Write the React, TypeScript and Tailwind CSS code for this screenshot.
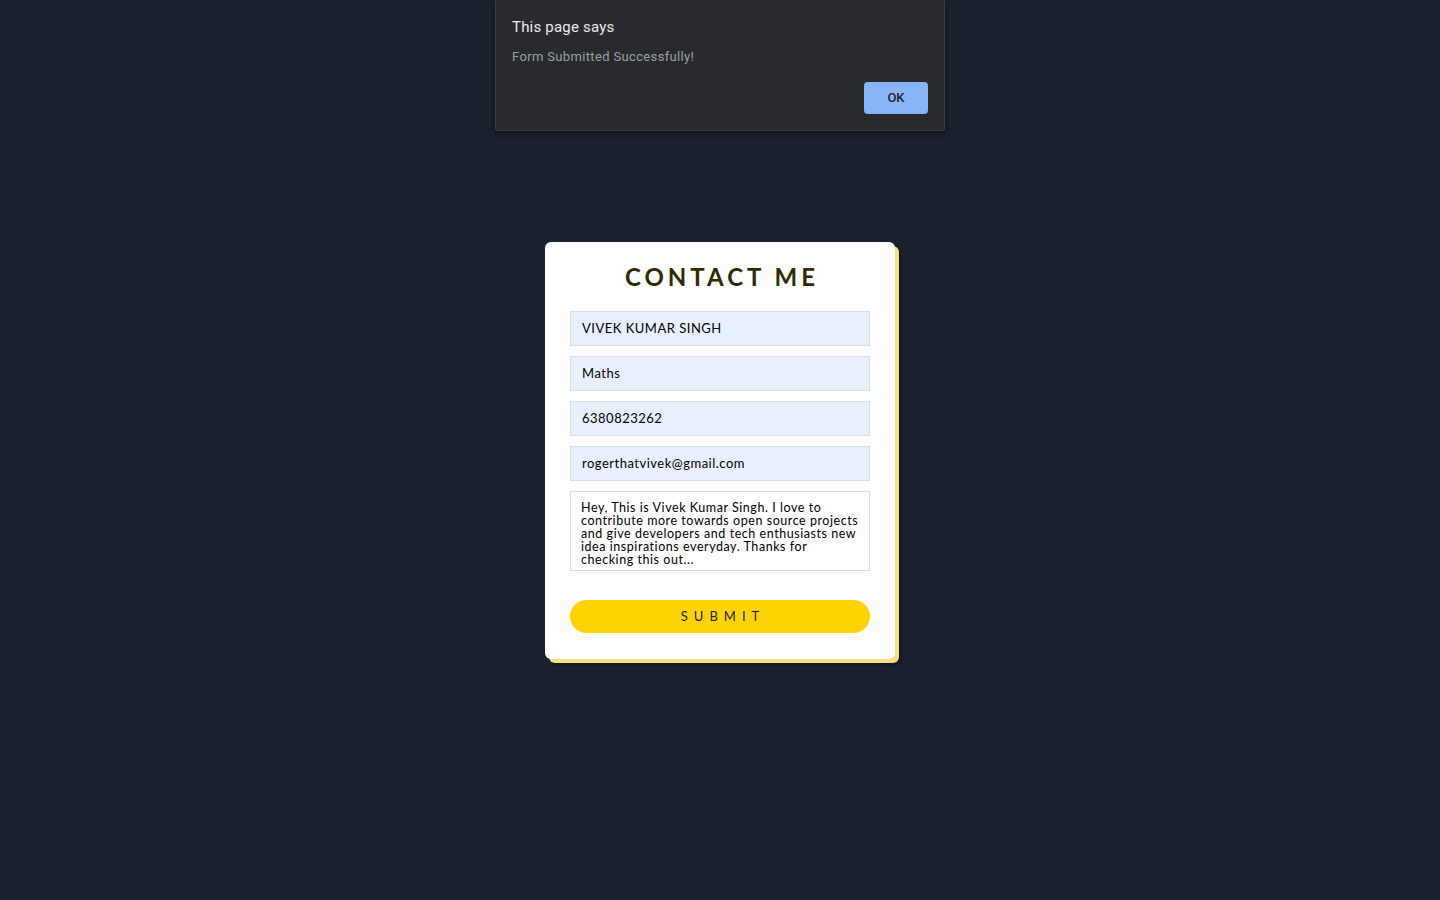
import React from "react";

export default function App() {
  const field =
    "h-[35px] w-full border border-[#d9dde3] bg-[#e8f0fe] pl-[11px] flex items-center text-[13px] tracking-[0.5px] text-black";
  return (
    <div className="relative min-h-[900px] w-full bg-[#1c2130]" style={{ fontFamily: "Lato, 'Noto Sans', sans-serif" }}>
      {/* Alert dialog */}
      <div className="absolute left-[495px] top-0 w-[450px] h-[131px] bg-[#292a2d] border border-[#3c3d40] border-t-0 rounded-b-[3px] shadow-[0_2px_6px_rgba(0,0,0,0.5)] px-[16px]" style={{ fontFamily: "Roboto, 'Liberation Sans', sans-serif" }}>
        <div className="pt-[17px] text-[15px] text-[#e8eaed] leading-[20px] tracking-[0.2px]">This page says</div>
        <div className="mt-[12px] text-[13px] text-[#9aa0a6] leading-[16px] tracking-[0.35px]">Form Submitted Successfully!</div>
        <div className="flex justify-end mt-[17px]">
          <button className="w-[64px] h-[32px] rounded-[4px] bg-[#8ab4f8] text-[13px] font-medium text-[#202124]">OK</button>
        </div>
      </div>

      {/* Contact card */}
      <div className="flex justify-center pt-[242px]">
        <div className="w-[350px] h-[417px] bg-white rounded-[6px] shadow-[4px_4px_0_#f7df86,5px_5px_4px_rgba(0,0,0,0.6)] px-[25px] pt-[20px]">
          <h1 className="text-center text-[24px] leading-[30px] tracking-[4px] font-bold text-[#2f2a06] pl-[4px]">CONTACT ME</h1>
          <div className="mt-[19px] flex flex-col gap-[10px]">
            <div className={field}>VIVEK KUMAR SINGH</div>
            <div className={field}>Maths</div>
            <div className={field}>6380823262</div>
            <div className={field}>rogerthatvivek@gmail.com</div>
            <div className="h-[80px] w-full border border-[#d9dde3] bg-white pl-[10px] pt-[9px] text-[12.5px] leading-[13px] tracking-[0.55px] text-black">
              Hey, This is Vivek Kumar Singh. I love to
              <br />
              contribute more towards open source projects
              <br />
              and give developers and tech enthusiasts new
              <br />
              idea inspirations everyday. Thanks for
              <br />
              checking this out...
            </div>
          </div>
          <button className="mt-[29px] w-full h-[33px] rounded-full bg-[#ffd400] text-[13px] tracking-[6px] text-[#222] pl-[6px]">
            SUBMIT
          </button>
        </div>
      </div>
    </div>
  );
}
